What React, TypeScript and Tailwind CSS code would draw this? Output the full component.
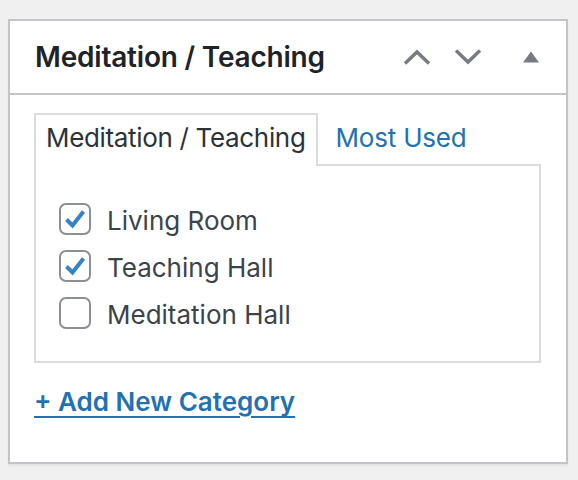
import React from "react";

const categories = [
  { id: 1, name: "Living Room", checked: true },
  { id: 2, name: "Teaching Hall", checked: true },
  { id: 3, name: "Meditation Hall", checked: false },
];

const Checkbox: React.FC<{ checked: boolean }> = ({ checked }) => (
  <span className="flex h-[32px] w-[32px] shrink-0 items-center justify-center rounded-[7px] border-2 border-[#8c8f94] bg-white">
    {checked && (
      <svg width="22" height="20" viewBox="0 0 22 20">
        <path d="M2.5 10.5 L8.5 16.5 L19.5 2.5" fill="none" stroke="#3582c4" strokeWidth="4" strokeLinejoin="miter" />
      </svg>
    )}
  </span>
);

const App: React.FC = () => {
  return (
    <div className="min-h-screen bg-[#f0f0f1] pl-2 pt-[19px] font-['Inter','Liberation_Sans',sans-serif]">
      <div className="h-[445px] w-[560px] border-2 border-[#c3c4c7] bg-white shadow-[0_2px_2px_rgba(0,0,0,0.05)]">
        {/* Header */}
        <div className="flex h-[74px] items-center border-b-2 border-[#c3c4c7] pl-[25px] pr-[27px]">
          <h2 className="text-[28px] font-semibold leading-none tracking-[-0.2px] text-[#1d2327]">
            Meditation / Teaching
          </h2>
          <div className="ml-auto flex items-center">
            <svg width="28" height="16" viewBox="0 0 28 16">
              <path d="M2 14.5 L14 3 L26 14.5" fill="none" stroke="#787c82" strokeWidth="3.5" />
            </svg>
            <svg className="ml-[23px]" width="28" height="16" viewBox="0 0 28 16">
              <path d="M2 1.5 L14 13 L26 1.5" fill="none" stroke="#787c82" strokeWidth="3.5" />
            </svg>
            <svg className="ml-[41px]" width="16" height="12" viewBox="0 0 16 12">
              <path d="M8 0.5 L16 11.5 L0 11.5 Z" fill="#787c82" />
            </svg>
          </div>
        </div>

        {/* Body */}
        <div className="pl-6 pt-[18px]">
          <div className="flex items-start">
            <div className="relative z-10 -mb-[2px] h-[53px] border-2 border-b-0 border-[#dcdcde] bg-white px-[10px] pt-[6px] text-[26px] leading-[33px] tracking-[-0.33px] text-[#2c3338]">
              Meditation / Teaching
            </div>
            <a className="ml-[18px] pt-[8px] text-[26px] leading-[33px] tracking-[-0.2px] text-[#2271b1]" href="#">
              Most Used
            </a>
          </div>
          <div className="h-[199px] w-[507px] border-2 border-[#dcdcde] bg-white pl-[23px] pt-[37px]">
            <ul className="flex flex-col gap-[15px]">
              {categories.map((c) => (
                <li key={c.id} className="flex h-[32px] items-center gap-[16px]">
                  <Checkbox checked={c.checked} />
                  <span className="pt-[3px] text-[26px] leading-none text-[#3c434a]">{c.name}</span>
                </li>
              ))}
            </ul>
          </div>
          <a
            href="#"
            className="mt-[21px] block w-fit text-[26px] font-semibold leading-[36px] text-[#2271b1] underline decoration-2 underline-offset-[5px]"
          >
            + Add New Category
          </a>
        </div>
      </div>
    </div>
  );
};

export default App;
